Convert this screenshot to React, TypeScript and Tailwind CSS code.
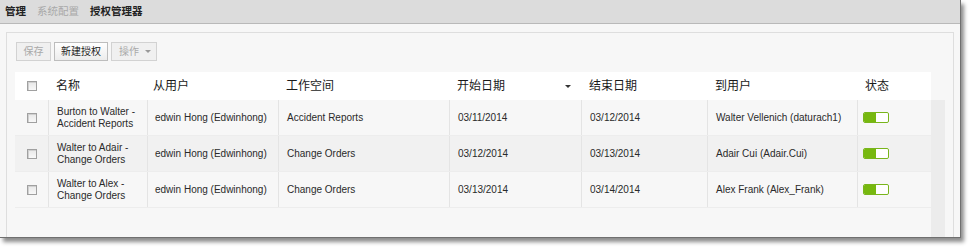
const ROWS = [
  {
    name: ['Burton to Walter -', 'Accident Reports'],
    from: 'edwin Hong (Edwinhong)',
    space: 'Accident Reports',
    start: '03/11/2014',
    end: '03/12/2014',
    to: 'Walter Vellenich (daturach1)',
  },
  {
    name: ['Walter to Adair -', 'Change Orders'],
    from: 'edwin Hong (Edwinhong)',
    space: 'Change Orders',
    start: '03/12/2014',
    end: '03/13/2014',
    to: 'Adair Cui (Adair.Cui)',
  },
  {
    name: ['Walter to Alex -', 'Change Orders'],
    from: 'edwin Hong (Edwinhong)',
    space: 'Change Orders',
    start: '03/13/2014',
    end: '03/14/2014',
    to: 'Alex Frank (Alex_Frank)',
  },
]

function Checkbox() {
  return (
    <span className="block w-[10px] h-[10px] border border-[#a0a0a0] bg-gradient-to-b from-[#e8e8e8] to-[#f8f8f8] shadow-[inset_1px_1px_0_#d0d0d0]" />
  )
}

function Toggle() {
  return (
    <span className="flex w-[26px] h-[11px] rounded-[2px] border border-[#79b51c] overflow-hidden bg-white">
      <span className="w-[12px] h-full bg-[#77b80f]" />
      <span className="flex-1 h-full bg-white rounded-[2px]" />
    </span>
  )
}

export default function App() {
  return (
    <div className="w-[969px] h-[250px] bg-white font-['Liberation_Sans','Noto_Sans_CJK_SC',sans-serif]">
      <div className="w-[961px] h-[238px] bg-[#f7f7f7] border-r border-b border-[#707070] shadow-[3px_4px_4px_rgba(0,0,0,0.45)] overflow-hidden flex flex-col">
        <div className="h-[24px] shrink-0 bg-[#dcdcdc] border-b border-[#b9b9b9] flex items-center pl-[5px] gap-[11px] text-[10.5px]">
          <span className="font-bold text-[#222]">管理</span>
          <span className="text-[#a8a8a8]">系统配置</span>
          <span className="font-bold text-[#222]">授权管理器</span>
        </div>

        <div className="flex-1 flex pt-[8px] px-[6px]">
          <div className="flex-1 flex flex-col border-l border-t border-r border-[#dedede] pt-[9px] pl-[8px] pr-[8px]">
            <div className="flex gap-[3px] text-[10px] h-[19px] pl-[1px]">
              <button className="h-[19px] w-[35px] border border-[#d2d2d2] bg-[#f0f0f0] text-[#a9a9a9]">保存</button>
              <button className="h-[19px] w-[54px] border border-[#bdbdbd] bg-gradient-to-b from-white to-[#ececec] text-[#222]">新建授权</button>
              <button className="h-[19px] w-[46px] pl-[7px] border border-[#d2d2d2] bg-[#f0f0f0] text-[#a9a9a9] flex items-center gap-[6px]">
                操作
                <span className="w-0 h-0 border-l-[3px] border-r-[3px] border-t-[3px] border-l-transparent border-r-transparent border-t-[#999]" />
              </button>
            </div>

            <div className="mt-[11px] flex flex-1">
              <div className="w-[916px] flex flex-col">
                <div className="h-[28px] bg-white flex items-center text-[12px] text-[#1a1a1a]">
                  <div className="w-[33px] flex justify-center"><Checkbox /></div>
                  <div className="w-[99px] pl-[8px]">名称</div>
                  <div className="w-[131px] pl-[6px]">从用户</div>
                  <div className="w-[171px] pl-[8px]">工作空间</div>
                  <div className="w-[132px] pl-[8px] pr-[10px] flex items-center justify-between">
                    开始日期
                    <span className="w-0 h-0 border-l-[3px] border-r-[3px] border-t-[3px] border-l-transparent border-r-transparent border-t-[#333]" />
                  </div>
                  <div className="w-[126px] pl-[8px]">结束日期</div>
                  <div className="w-[150px] pl-[8px]">到用户</div>
                  <div className="w-[74px] pl-[8px]">状态</div>
                </div>
                {ROWS.map((r, i) => (
                  <div
                    key={r.start}
                    className={`h-[36px] flex items-stretch border-b border-[#ededed] text-[10px] leading-[12px] text-[#2a2a2a] ${i === 1 ? 'bg-[#f1f1f1]' : 'bg-[#f7f7f7]'}`}
                  >
                    <div className="w-[33px] flex items-center justify-center"><Checkbox /></div>
                    <div className="w-[99px] border-l border-[#e4e4e4] pl-[8px] flex flex-col justify-center">
                      <span>{r.name[0]}</span>
                      <span>{r.name[1]}</span>
                    </div>
                    <div className="w-[131px] border-l border-[#e4e4e4] pl-[7px] flex items-center">{r.from}</div>
                    <div className="w-[171px] border-l border-[#e4e4e4] pl-[8px] flex items-center">{r.space}</div>
                    <div className="w-[132px] border-l border-[#e4e4e4] pl-[8px] flex items-center">{r.start}</div>
                    <div className="w-[126px] border-l border-[#e4e4e4] pl-[8px] flex items-center">{r.end}</div>
                    <div className="w-[150px] border-l border-[#e4e4e4] pl-[8px] flex items-center">{r.to}</div>
                    <div className="w-[74px] border-l border-[#e4e4e4] pl-[5px] flex items-center"><Toggle /></div>
                  </div>
                ))}
              </div>
              <div className="w-[14px] mt-[28px] bg-[#ececec]" />
            </div>
          </div>
        </div>
      </div>
    </div>
  )
}
